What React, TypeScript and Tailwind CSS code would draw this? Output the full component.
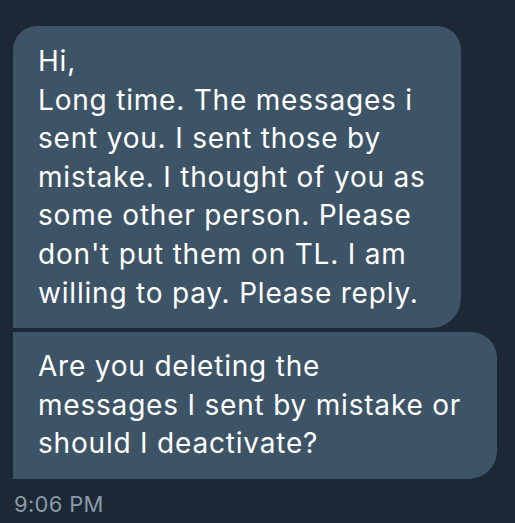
export default function App() {
  const font = { fontFamily: 'Inter, "Noto Sans", sans-serif' };
  const lines1 = [
    "Hi,",
    "Long time. The messages i",
    "sent you. I sent those by",
    "mistake. I thought of you as",
    "some other person. Please",
    "don't put them on TL. I am",
    "willing to pay. Please reply.",
  ];
  const lines2 = [
    "Are you deleting the",
    "messages I sent by mistake or",
    "should I deactivate?",
  ];
  return (
    <div className="w-[515px] h-[523px] bg-[#1c2835] overflow-hidden" style={font}>
      <div className="flex flex-col items-start pt-[26px] pl-[13px]">
        <div className="w-[448px] bg-[#3d5466] rounded-t-[24px] rounded-br-[30px] pl-[25px] pt-[16px] pb-[15.5px] text-white text-[28px] leading-[38.6px] tracking-[0.8px]">
          {lines1.map((l, i) => (
            <div key={i} className="whitespace-nowrap">{l}</div>
          ))}
        </div>
        <div className="mt-[4.5px] w-[484px] bg-[#3d5466] rounded-tr-[26px] rounded-br-[28px] pl-[25px] pt-[15px] pb-[16px] text-white text-[28px] leading-[38.6px] tracking-[0.8px]">
          {lines2.map((l, i) => (
            <div key={i} className="whitespace-nowrap">{l}</div>
          ))}
        </div>
        <div className="text-[#8a9aa8] text-[22px] leading-[26px] mt-[12.5px] pl-[1px] tracking-[0.3px]">9:06 PM</div>
      </div>
    </div>
  );
}
